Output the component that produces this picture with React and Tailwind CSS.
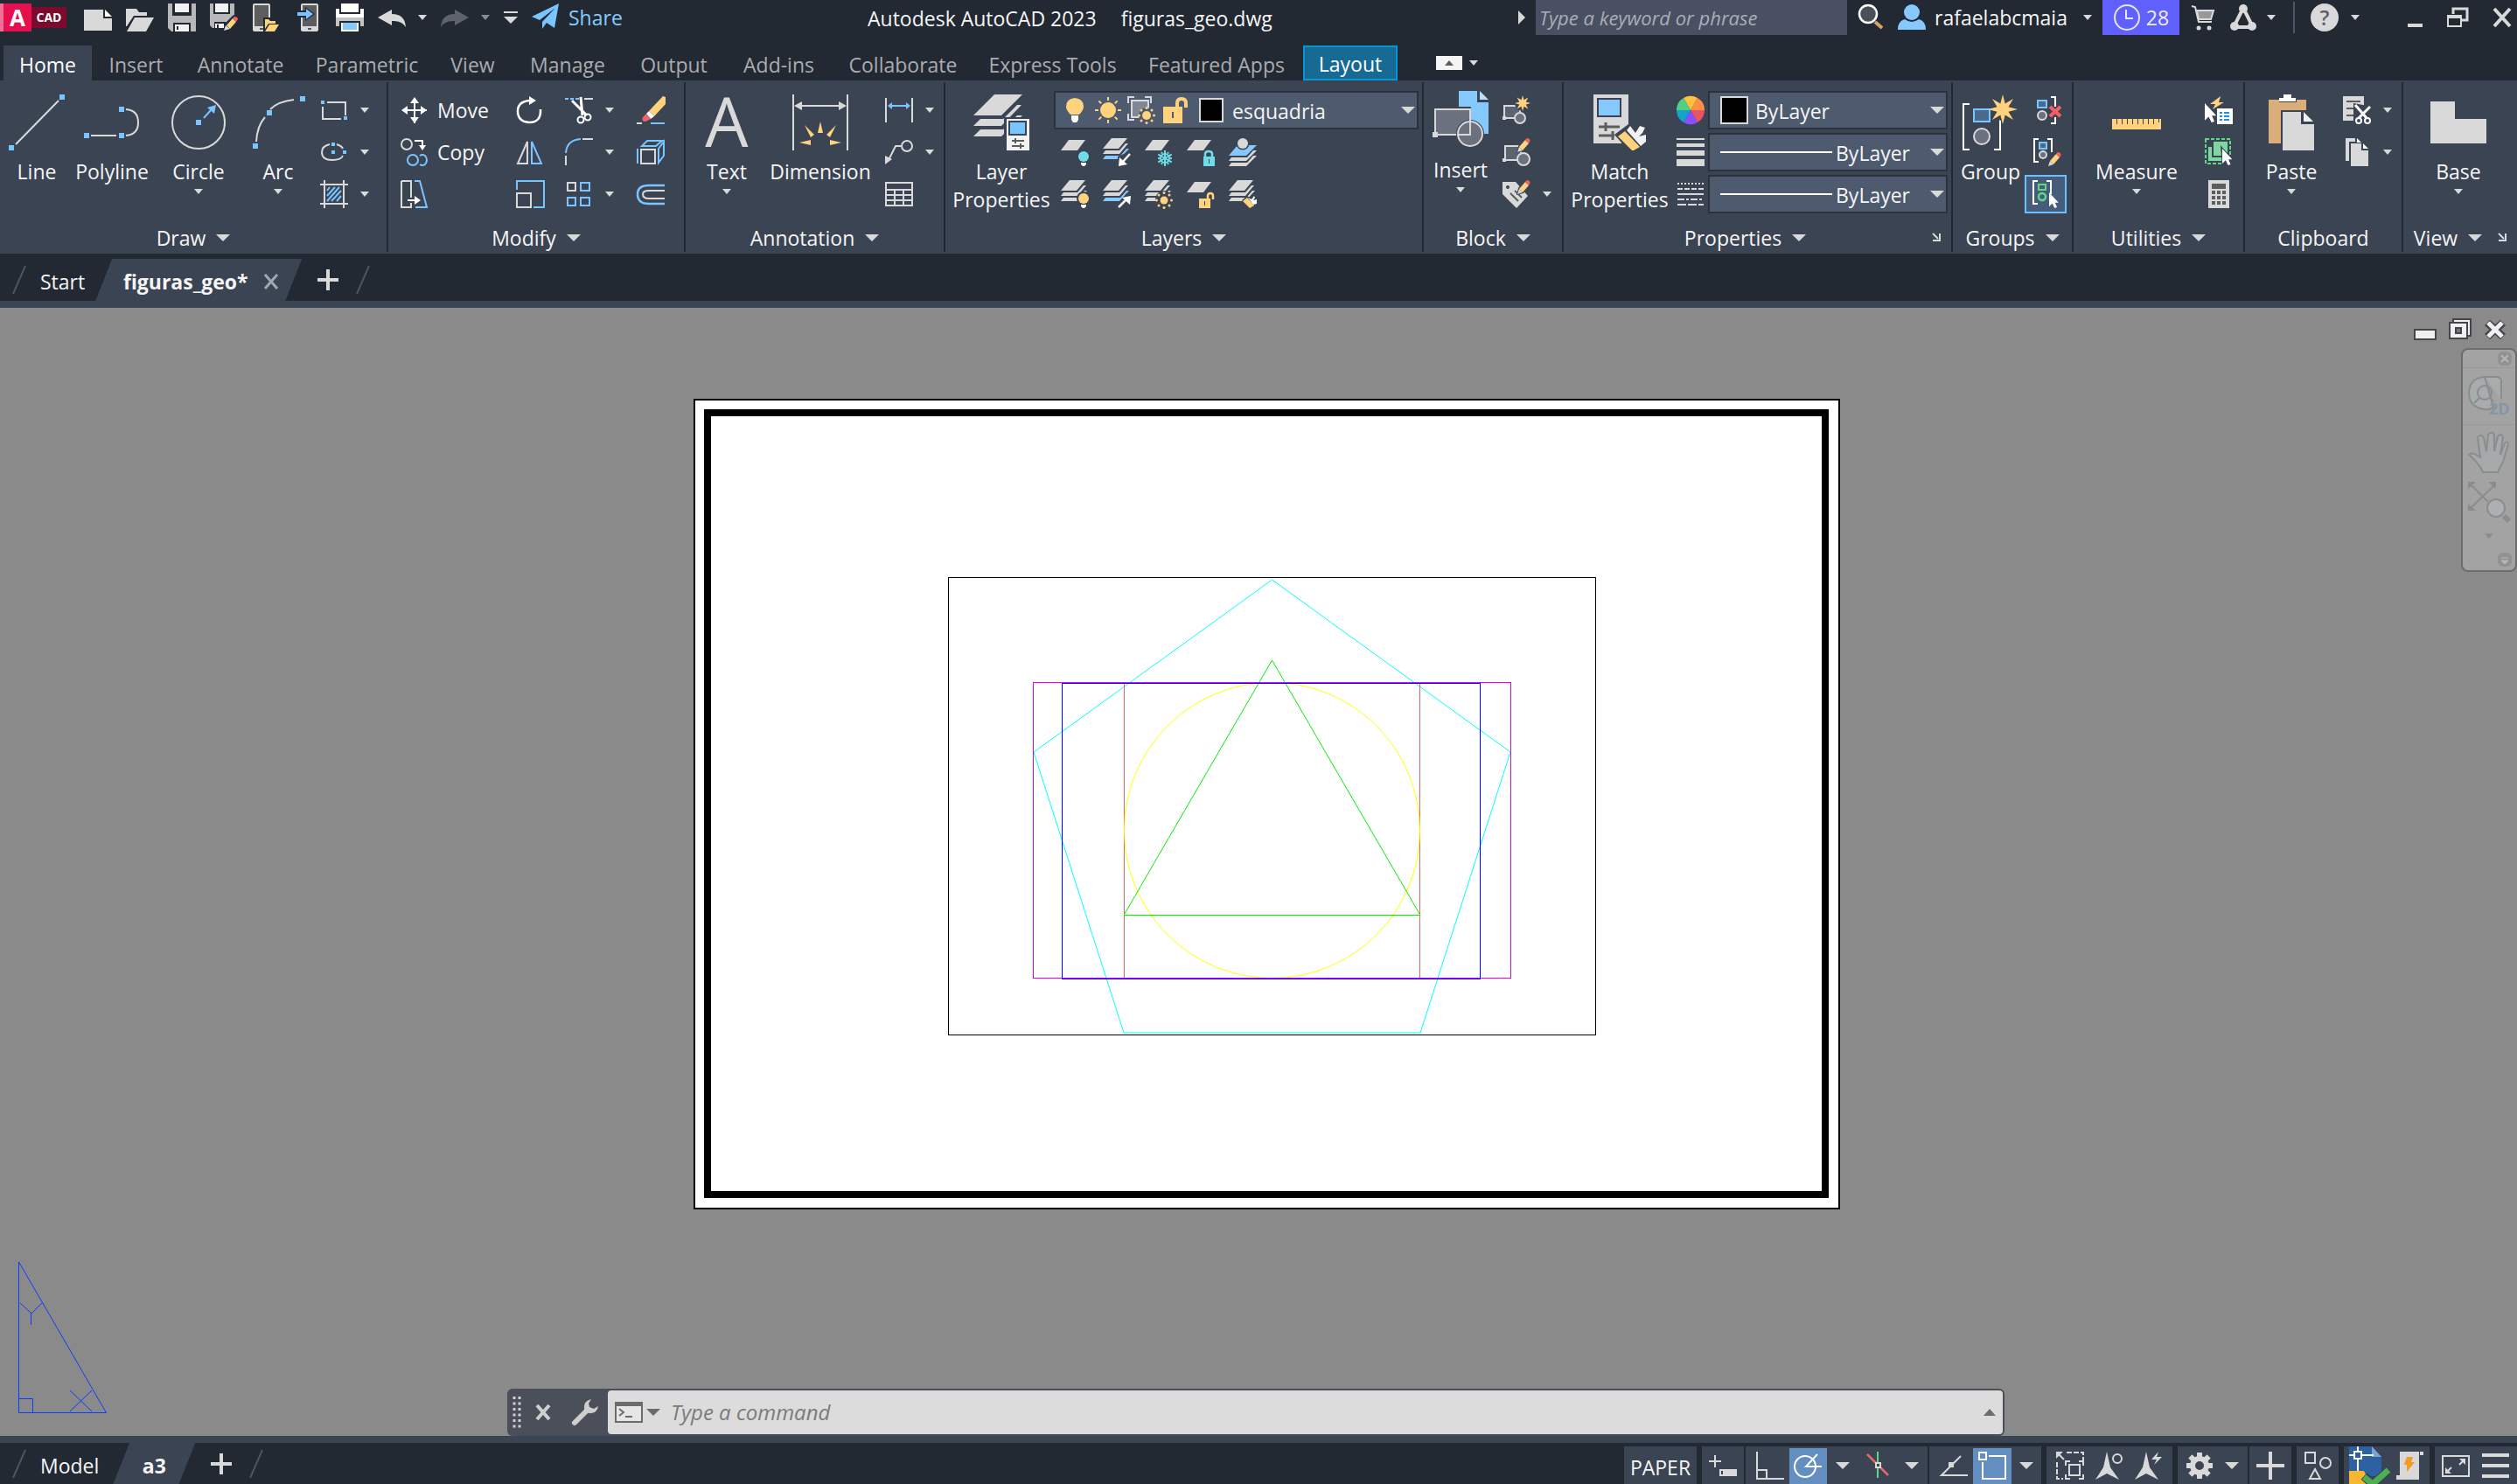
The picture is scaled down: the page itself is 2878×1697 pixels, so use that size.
import React from "react";

const G = "#d9d9d9";
const B = "#78c5ff";
const Y = "#ffd27d";
const W = "#ffffff";
const D = "#3b4453";
const C = "#6fdde8";
const GR = "#5fd885";

function Svg({ w = 32, h = 32, children }) {
  return (
    <svg width={w} height={h} viewBox={`0 0 ${w} ${h}`} fill="none" aria-hidden="true" className="shrink-0 overflow-visible">
      {children}
    </svg>
  );
}

function Caret({ w = 10, h = 6, color = G }) {
  return (
    <Svg w={w} h={h}>
      <path d={`M0 0H${w}L${w / 2} ${h}Z`} fill={color} />
    </Svg>
  );
}

function star(cx, cy, r, r2, n) {
  const pts = [];
  for (let i = 0; i < n * 2; i++) {
    const rr = i % 2 ? r2 : r;
    const a = (Math.PI * i) / n;
    pts.push(`${(cx + rr * Math.sin(a)).toFixed(1)},${(cy - rr * Math.cos(a)).toFixed(1)}`);
  }
  return pts.join(" ");
}

const Sq = ({ x, y, c = B }) => <rect x={x} y={y} width="6" height="6" fill={c} />;
const Dots = ({ cx, cy, r, n = 8, s = 1.5, c = Y }) =>
  Array.from({ length: n }, (_, i) => {
    const a = (2 * Math.PI * i) / n;
    return <circle key={i} cx={cx + r * Math.sin(a)} cy={cy - r * Math.cos(a)} r={s} fill={c} />;
  });
const Rays = ({ cx, cy, r1, r2, n = 8, sw = 2, c = Y }) =>
  Array.from({ length: n }, (_, i) => {
    const a = (2 * Math.PI * i) / n;
    const sx = Math.sin(a);
    const sy = -Math.cos(a);
    return <line key={i} x1={cx + r1 * sx} y1={cy + r1 * sy} x2={cx + r2 * sx} y2={cy + r2 * sy} stroke={c} strokeWidth={sw} />;
  });

const Sheet1 = () => <path d="M0 14L9 2H28L19 14Z" fill={G} />;
const Stack = ({ last = G }) => (
  <>
    <path d="M0 12L10 0H28L18 12Z" fill={G} />
    <path d="M0 18L3 14H19L26 6H29L19 18Z" fill={G} />
    <path d="M0 24L3 20H20L27 12H30L19 24Z" fill={last} />
  </>
);
const SmallBulb = ({ c }) => (
  <>
    <circle cx="26" cy="21" r="8" fill={D} />
    <circle cx="26" cy="21" r="6" fill={c} />
    <path d="M23 28H29V30L27 32H25L23 30Z" fill={W} />
  </>
);
const Pencil = ({ x, y }) => (
  <g transform={`translate(${x} ${y})`}>
    <path d="M-1 17L1 9L9 -1L15 2L15 6L7 15Z" fill={D} />
    <path d="M0 16L2 10L6 14Z" fill={G} />
    <path d="M2 10L9 2L13 6L6 14Z" fill={Y} />
    <path d="M9 2Q11 -1 13 0.500Q16 2 13 6Z" fill="#f75f66" />
  </g>
);
const Cursor = ({ x, y, s = 1 }) => (
  <path transform={`translate(${x} ${y}) scale(${s})`} d="M0 0V18L4 14L7 20L10 19L7.500 13H12Z" fill={W} />
);

const I = {
  fileNew: <Svg><path d="M0 7H22V17H32V31H0Z" fill={G} /><path d="M24 7L32 15H24Z" fill={W} /></Svg>,
  open: <Svg><path d="M0 6H12L15 10H24V14H9L1 26H0Z" fill={G} /><path d="M10 16H32L23 32H1Z" fill={G} /></Svg>,
  save: (
    <Svg><path d="M0 0H5V12H27V0H32V32H26V22H6V32H4L0 28Z" fill="#b8b8b8" /><path d="M0 12H32V14H0Z" fill="#222932" /><path d="M0 12H5V22H0ZM27 12H32V22H27ZM0 14H32V22H0Z" fill="#b8b8b8" /><rect x="8" y="0" width="16" height="10" fill="#f2f2f2" /><rect x="8" y="24" width="16" height="8" fill="#f2f2f2" /><rect x="10" y="26" width="2" height="4" fill="#222932" /></Svg>
  ),
  saveAs: (
    <Svg><path d="M0 0H4V12H23V0H28V20L20 28H18V21H5V28H3L0 25Z" fill="#b8b8b8" /><rect x="6" y="0" width="15" height="10" fill="#f2f2f2" /><path d="M6 23H16V28H6Z" fill="#f2f2f2" /><rect x="8" y="24" width="2" height="4" fill="#222932" /><path d="M15 32L18 22L27 13L33 18L23 29Z" fill="#222932" /><path d="M16 31L18 25L23 29Z" fill={G} /><path d="M19 25L26 17L30 21L23 29Z" fill={Y} /><path d="M26 17Q29 13 32 17Q32 19 30 21Z" fill="#f75f66" /></Svg>
  ),
  phoneOpen: (
    <Svg><rect x="1" y="0" width="20" height="32" rx="2" fill={G} /><rect x="3" y="2" width="16" height="24" fill="#5d5d5d" /><rect x="9" y="28" width="4" height="2" fill="#555" /><path d="M13 16H31V32H13Z" fill="#222932" /><path d="M15 18H19L21 20H27V23H19L15 29Z" fill={Y} /><path d="M20 24H31L26 32H15Z" fill={Y} /></Svg>
  ),
  phoneSave: (
    <Svg><rect x="8" y="0" width="20" height="32" rx="2" fill={G} /><rect x="10" y="2" width="16" height="24" fill="#5d5d5d" /><rect x="16" y="28" width="4" height="2" fill="#555" /><path d="M4 8H13V4L24 12L13 20V16H4Z" fill="#222932" /><path d="M4 10H14V6L22 12L14 18V14H4Z" fill={B} /></Svg>
  ),
  print: (
    <Svg><rect x="6" y="0" width="20" height="10" fill={W} /><path d="M0 6H4V12H28V6H32V16H0Z" fill={W} /><path d="M0 16H32V26H28V20H4V26H0Z" fill="#c4c4c4" /><path d="M6 22H26V32H6Z" fill={W} /><rect x="8" y="22" width="16" height="8" fill="#86c9ff" /></Svg>
  ),
  undo: <Svg><path d="M0 16L16 7V12Q31 12 32 27Q27 19 16 20V25Z" fill={G} /></Svg>,
  redo: <Svg><path d="M32 16L16 7V12Q1 12 0 27Q5 19 16 20V25Z" fill="#5e636b" /></Svg>,
  custom: <Svg w={16} h={16}><rect x="0" y="1" width="16" height="2" fill={G} /><path d="M0 7H16L8 15Z" fill={G} /></Svg>,
  share: <Svg><path d="M31 0L0 15L9 19L27 5L12 21V29L17 22L26 28Z" fill={B} /></Svg>,
  search: <Svg><circle cx="12" cy="12" r="10" fill="#4a505a" stroke={W} strokeWidth="2.500" /><path d="M20 21L28 28" stroke="#d9a066" strokeWidth="4" /></Svg>,
  user: <Svg><circle cx="16" cy="10" r="9" fill="#86c9ff" /><path d="M0 30Q0 20 8 18Q16 24 24 18Q32 20 32 30Z" fill="#86c9ff" /></Svg>,
  clock: <Svg><circle cx="16" cy="16" r="14" stroke="#e6e6ff" strokeWidth="2" /><path d="M15 7V17H23" stroke="#e6e6ff" strokeWidth="2" /></Svg>,
  cart: <Svg w={26} h={30}><path d="M0 2L4 3L8 20H23" stroke={G} strokeWidth="2" /><path d="M6 7H25L22 17H8Z" fill="#999" stroke={G} strokeWidth="2" /><circle cx="8" cy="27" r="2.500" fill={G} /><circle cx="20" cy="27" r="2.500" fill={G} /></Svg>,
  appStore: <Svg w={30} h={30}><path d="M15 4L4 26H26Z" stroke={G} strokeWidth="4" /><circle cx="15" cy="5" r="5" fill={G} /><circle cx="5" cy="25" r="5" fill={G} /><circle cx="25" cy="25" r="5" fill={G} /></Svg>,
  line: <Svg w={64} h={64}><path d="M8 57L57 7" stroke={G} strokeWidth="2" /><Sq x={0} y={58} /><Sq x={58} y={0} /></Svg>,
  polyline: <Svg w={64} h={64}><path d="M8 47H37M48 17Q62 18 62 32Q62 46 48 47" stroke={G} strokeWidth="2" /><Sq x={0} y={44} /><Sq x={40} y={14} /><Sq x={40} y={44} /></Svg>,
  circle: <Svg w={64} h={64}><circle cx="32" cy="32" r="30" stroke={G} strokeWidth="2" /><Sq x={29} y={29} /><path d="M38 27L46 18" stroke={B} strokeWidth="2" /><path d="M52 12L50 22L42 15Z" fill={B} /></Svg>,
  arc: <Svg w={64} h={64}><path d="M7 54Q8 36 17 26M23 17Q32 8 50 6" stroke={G} strokeWidth="2" /><Sq x={3} y={56} /><Sq x={19} y={18} /><Sq x={57} y={2} /></Svg>,
  rect: <Svg><path d="M8 7H29V22M24 26H3V12" stroke={G} strokeWidth="2" /><rect x="1" y="5" width="4" height="4" fill={B} /><rect x="27" y="23" width="4" height="4" fill={B} /></Svg>,
  ellipse: <Svg><path d="M11 7Q2 9 2 16Q2 25 14 25Q24 25 26 20M19 7Q25 9 26 12" stroke={G} strokeWidth="2" /><rect x="13" y="5" width="4" height="4" fill={B} /><rect x="13" y="14" width="4" height="4" fill={B} /><rect x="26" y="14" width="4" height="4" fill={B} /></Svg>,
  hatch: <Svg><path d="M8 24L22 8M8 18L17 8M13 24L24 12M19 24L24 18M8 12L11 8" stroke={B} strokeWidth="2" /><path d="M5 0V32M27 0V32M0 5H32M0 27H32" stroke={G} strokeWidth="2" /></Svg>,
  move: <Svg><path d="M16 2V31M2 16H30" stroke={W} strokeWidth="2" /><path d="M16 1L21 8H11ZM16 31L21 24H11ZM1 16L8 11V21ZM30 16L23 11V21Z" fill={W} /></Svg>,
  copy: <Svg><circle cx="7" cy="7" r="6" stroke={G} strokeWidth="2" /><path d="M16 3H25V9" stroke={W} strokeWidth="2" /><path d="M21 8H29L25 14Z" fill={W} /><circle cx="14" cy="25" r="6" stroke={B} strokeWidth="2" /><path d="M22 20Q25 18 28 20Q32 25 28 30Q25 32 22 30" stroke={B} strokeWidth="2" /></Svg>,
  stretch: <Svg><path d="M16 1H22L30 31H17" stroke={B} strokeWidth="2" /><path d="M1 1H12V20M12 26V31H1V1" stroke={G} strokeWidth="2" /><path d="M8 23H17" stroke={W} strokeWidth="2" /><path d="M16 18L23 23L16 28Z" fill={W} /></Svg>,
  rotate: <Svg><path d="M28 15Q29 30 15 30Q2 29 2 17Q2 6 16 5" stroke={W} strokeWidth="2.500" /><path d="M15 0L23 5L15 10Z" fill={W} /></Svg>,
  mirror: <Svg><path d="M13 4V29H2Z" stroke={G} strokeWidth="2" /><path d="M18 4V29H29Z" stroke={B} strokeWidth="2" /></Svg>,
  scale: <Svg><path d="M1 11V1H32V31H20" stroke={B} strokeWidth="2" /><rect x="1" y="15" width="16" height="16" stroke={G} strokeWidth="2" /></Svg>,
  trim: <Svg><path d="M0 3H4M6 3H10M12 3H16" stroke={B} strokeWidth="2" /><path d="M22 3H32" stroke={G} strokeWidth="2" /><path d="M18 1L20 22M8 5L25 22" stroke={W} strokeWidth="3" /><circle cx="18" cy="27" r="3.500" stroke={W} strokeWidth="2" /><circle cx="26" cy="24" r="3.500" stroke={W} strokeWidth="2" /></Svg>,
  fillet: <Svg><path d="M1 17Q2 2 18 1" stroke={B} strokeWidth="2" /><path d="M20 1H32M1 20V31" stroke={G} strokeWidth="2" /></Svg>,
  array: <Svg><rect x="3" y="3" width="9" height="9" stroke={G} strokeWidth="2" /><path d="M18 3H28V12H18ZM3 20H12V29H3ZM18 20H28V29H18Z" stroke={B} strokeWidth="2" /></Svg>,
  erase: <Svg><path d="M14 17L30 0L33 1V9L20 23Z" fill={Y} /><path d="M14 17L20 23L16 26L11 20Z" fill={W} /><path d="M11 20L16 26L10 29Q5 29 7 24Z" fill="#f0666b" /><path d="M0 31H6" stroke={G} strokeWidth="2" /><path d="M16 31H32" stroke={B} strokeWidth="2" /></Svg>,
  explode: <Svg><path d="M1 12V29M12 3H29L22 9H6ZM31 4V20L25 28V12Z" stroke={B} strokeWidth="2" /><rect x="5" y="13" width="16" height="16" stroke={G} strokeWidth="2" /></Svg>,
  offset: <Svg><path d="M32 6H14Q1 6 1 16Q1 27 14 27H32" stroke={B} strokeWidth="2.500" /><path d="M32 12H14Q7 12 7 16Q7 21 14 21H32" stroke={G} strokeWidth="2" /></Svg>,
  text: <Svg w={64} h={64}><text x="32" y="60" textAnchor="middle" fontSize="78" fill={G} fontFamily="Open Sans, sans-serif">A</text></Svg>,
  dimension: (
    <Svg w={64} h={64}><path d="M1 0V64M63 0V64M4 13H60" stroke={G} strokeWidth="2" /><path d="M2 13L11 8V18ZM62 13L53 8V18Z" fill={G} /><path d="M32 31L35 44H29ZM14 35L25 46L21 49ZM50 35L39 46L43 49ZM8 55L21 52V58ZM56 55L43 52V58Z" fill={Y} /></Svg>
  ),
  linear: <Svg><path d="M1 2V30M31 2V30" stroke={G} strokeWidth="2" /><path d="M5 11H27" stroke={B} strokeWidth="2" /><path d="M3 11L8 7V15ZM29 11L24 7V15Z" fill={B} /></Svg>,
  leader: <Svg><circle cx="25" cy="9" r="6" stroke={G} strokeWidth="2" /><path d="M18 9H12L4 25" stroke={G} strokeWidth="2" /><path d="M0 30V20L8 24Z" fill={G} /></Svg>,
  table: <Svg><rect x="1" y="3" width="30" height="26" stroke={G} strokeWidth="2" /><path d="M1 11H31M1 17H31M1 23H31M11 11V29M21 11V29" stroke={G} strokeWidth="2" /></Svg>,
  layerProps: (
    <Svg w={64} h={64}><path d="M0 24L24 0H56L32 24Z" fill={G} /><path d="M0 36L8 28H34L50 12H55L32 36Z" fill={G} /><path d="M0 48L8 40H34L50 24H56L32 48Z" fill={G} /><rect x="35" y="26" width="29" height="38" fill={D} /><rect x="38" y="28" width="26" height="36" fill="#f2f2f2" /><rect x="41" y="31" width="19" height="15" fill={B} stroke={D} strokeWidth="2" /><path d="M44 53H58M44 59H58M48 50V56M54 56V62" stroke="#5d5d5d" strokeWidth="2" /></Svg>
  ),
  bulb: <Svg w={20} h={32}><path d="M10 2Q20 3 20 12Q20 16 15 21H5Q0 16 0 12Q0 3 10 2Z" fill={Y} /><path d="M6 22H14V27L12 30H8L6 27Z" fill={W} /></Svg>,
  sun: <Svg w={30} h={32}><circle cx="15" cy="16" r="9" fill={Y} /><Rays cx={15} cy={16} r1={11} r2={15} /></Svg>,
  vpSun: <Svg><path d="M1 8V1H8M20 1H27V8M1 20V27H8" stroke={G} strokeWidth="2" /><path d="M5 5H24V14L14 24H5Z" fill="#808795" stroke={G} strokeWidth="2" /><circle cx="22" cy="22" r="9" fill="#4e5a6e" /><circle cx="22" cy="22" r="5" fill={Y} /><Dots cx={22} cy={22} r={8.5} /></Svg>,
  lockOpen: <Svg w={28} h={32}><path d="M16 13V8Q16 3 21 3Q26 3 26 8V13" stroke={Y} strokeWidth="4" /><rect x="0" y="12" width="22" height="19" fill={Y} /><rect x="10" y="18" width="2" height="7" fill="#4e5a6e" /></Svg>,
  swatch: <Svg w={28} h={28}><rect x="1" y="1" width="26" height="26" fill="#000" stroke={G} strokeWidth="2" /></Svg>,
  swatchBig: <Svg><rect x="1" y="1" width="30" height="30" fill="#000" stroke={G} strokeWidth="2" /></Svg>,
  lOff: <Svg><Sheet1 /><SmallBulb c={C} /></Svg>,
  lCur: <Svg><Stack last="#86c9ff" /><path d="M17 33V21L33 14V32Z" fill={D} /><path d="M31 18L22 28" stroke={W} strokeWidth="2.500" /><path d="M18 32L19 22L28 30Z" fill={W} /></Svg>,
  lFreeze: <Svg><Sheet1 /><Rays cx={23} cy={23} r1={0} r2={9} n={6} c={C} /><circle cx="23" cy="23" r="5" stroke={C} strokeWidth="2" /><Rays cx={23} cy={23} r1={6} r2={8} n={12} sw={2} c={C} /></Svg>,
  lLock: <Svg><Sheet1 /><path d="M21 22V18Q21 15 25 15Q29 15 29 18V22" stroke={C} strokeWidth="2.500" /><rect x="19" y="21" width="13" height="11" fill={C} /><rect x="25" y="24" width="1" height="5" fill={D} /></Svg>,
  lMatch: <Svg><path d="M0 20L10 8H32L20 20Z" fill="#86c9ff" /><circle cx="16" cy="6" r="7.500" fill={D} /><circle cx="16" cy="6" r="6" fill={G} /><path d="M0 26L3 22H21L28 14H32L20 26ZM0 32L3 28H21L28 20H32L20 32Z" fill={G} /></Svg>,
  lOn: <Svg><Stack /><SmallBulb c={Y} /></Svg>,
  lPrev: <Svg><Stack last="#86c9ff" /><path d="M20 33V25L27 15L33 17V32Z" fill={D} /><path d="M18 31L27 22" stroke={W} strokeWidth="2.500" /><path d="M32 18L31 28L22 20Z" fill={W} /></Svg>,
  lThaw: <Svg><Stack /><circle cx="22" cy="22" r="10" fill={D} /><circle cx="22" cy="23" r="4.500" fill={Y} /><Dots cx={22} cy={23} r={8.5} /></Svg>,
  lUnlock: <Svg><Sheet1 /><path d="M24 22V18Q24 15 27 15Q30 15 30 18V22" stroke={Y} strokeWidth="2.500" /><rect x="14" y="21" width="13" height="11" fill={Y} /><rect x="20" y="24" width="1" height="5" fill={D} /></Svg>,
  lBrush: <Svg><Stack /><path d="M15 23L21 18L26 21L29 16L33 20V32H21Z" fill={D} /><path d="M16 24L21 20L29 29L24 32Z" fill={Y} /><path d="M22 20L26 22L29 18L30 20L28 23L32 22V27L28 28Z" fill={W} /></Svg>,
  insert: (
    <Svg w={64} h={68}><path d="M30 0H51V13H64V49H30Z" fill="#86c9ff" /><path d="M54 0L64 10H54Z" fill="#b9e0ff" /><path d="M0 18H44V34L58 50L40 60H0Z" fill={D} /><rect x="3" y="21" width="40" height="29" fill="#6b717f" stroke={G} strokeWidth="2" /><circle cx="43" cy="49" r="16" fill={D} /><circle cx="43" cy="49" r="14" fill="#6b717f" stroke={G} strokeWidth="2" /><path d="M28 50H43V33" stroke={G} strokeWidth="2" /><rect x="0" y="47" width="6" height="6" fill={G} /></Svg>
  ),
  blockNew: <Svg><rect x="2" y="11" width="18" height="14" fill="#5b6270" stroke={G} strokeWidth="2" /><circle cx="20" cy="25" r="6" fill="#6b717f" stroke={G} strokeWidth="2" /><rect x="0" y="23" width="4" height="4" fill={G} /><circle cx="23" cy="8" r="9" fill={D} /><polygon points={star(23, 8, 9, 4, 8)} fill={Y} /></Svg>,
  blockEdit: <Svg><rect x="3" y="9" width="18" height="16" fill="#5b6270" stroke={G} strokeWidth="2" /><circle cx="24" cy="24" r="7" fill="#6b717f" stroke={G} strokeWidth="2" /><rect x="0" y="23" width="4" height="4" fill={G} /><Pencil x={17} y={0} /></Svg>,
  attrEdit: <Svg><path d="M0 2H15L29 18L16 32L0 16Z" fill={G} /><circle cx="6" cy="8" r="2" fill={D} /><path d="M9 15L18 24M14 12L22 20" stroke="#5d5d5d" strokeWidth="2" /><Pencil x={17} y={0} /></Svg>,
  match: (
    <Svg w={64} h={64}><path d="M2 0H42V38L34 56H2Z" fill={G} /><rect x="7" y="5" width="26" height="20" fill="#86c9ff" stroke={D} strokeWidth="2" /><path d="M8 37H32M8 47H26M16 32V42M24 42V52" stroke="#5d5d5d" strokeWidth="3" /><path d="M26 46L42 34L64 34V56L50 66L42 64Z" fill={D} /><path d="M30 48L38 42L55 60L48 64H46Z" fill={Y} /><path d="M40 41L44 36L50 44L55 36L61 38L58 44L54 48L62 46V54L56 59Z" fill="#f2f2f2" /></Svg>
  ),
  wheel: (
    <Svg>
      <path d="M16 16L8 2.100A16 16 0 0 1 24 2.100Z" fill="#ffc23d" /><path d="M16 16L24 2.100A16 16 0 0 1 32 16Z" fill="#ff8f43" /><path d="M16 16L32 16A16 16 0 0 1 24 29.900Z" fill="#e85460" /><path d="M16 16L24 29.900A16 16 0 0 1 8 29.900Z" fill="#8a4dff" /><path d="M16 16L8 29.900A16 16 0 0 1 0 16Z" fill="#12a5c9" /><path d="M16 16L0 16A16 16 0 0 1 8 2.100Z" fill="#52cf83" />
    </Svg>
  ),
  weights: <Svg><path d="M0 0H32V2H0ZM0 6H32V10H0ZM0 14H32V20H0ZM0 24H32V32H0Z" fill={G} /></Svg>,
  types: <Svg><path d="M1 4H31" stroke={G} strokeWidth="2" strokeDasharray="2 2" /><path d="M1 10H31" stroke={G} strokeWidth="2" strokeDasharray="6 2" /><path d="M1 16H31" stroke={G} strokeWidth="2" /><path d="M1 22H31" stroke={G} strokeWidth="2" strokeDasharray="8 2 3 2" /><path d="M1 28H31" stroke={G} strokeWidth="2" strokeDasharray="10 2" /></Svg>,
  group: (
    <Svg w={64} h={64}><path d="M8 11H1V63H8M36 63H43V28" stroke={W} strokeWidth="2" /><rect x="13" y="17" width="18" height="14" fill="#4a6a8c" stroke={B} strokeWidth="2" /><circle cx="22" cy="48" r="9" fill="#6b717f" stroke={G} strokeWidth="2" /><circle cx="46" cy="16" r="14" fill={D} /><polygon points={star(46, 17, 17, 7, 8)} fill={Y} /></Svg>
  ),
  ungroup: <Svg><path d="M20 1H25V12M25 24V31H20" stroke={W} strokeWidth="2" /><rect x="5" y="5" width="10" height="8" fill="#4a6a8c" stroke={B} strokeWidth="2" /><circle cx="10" cy="22" r="5" fill="#6b717f" stroke={G} strokeWidth="2" /><path d="M19 12L31 23M31 12L19 23" stroke="#f75f66" strokeWidth="4" /></Svg>,
  groupEdit: <Svg><path d="M6 1H1V27H6M16 1H21V16" stroke={W} strokeWidth="2" /><rect x="7" y="5" width="8" height="7" fill="#4a6a8c" stroke={B} strokeWidth="2" /><circle cx="11" cy="19" r="4" fill="#6b717f" stroke={G} strokeWidth="2" /><Pencil x={17} y={16} /></Svg>,
  groupSel: <Svg><path d="M7 1H2V27H7M17 1H22V16" stroke={W} strokeWidth="2" /><rect x="8" y="5" width="8" height="6" stroke={GR} strokeWidth="2" /><circle cx="12" cy="19" r="4" stroke={GR} strokeWidth="2.500" /><Cursor x={20} y={14} s={0.9} /></Svg>,
  ruler: <Svg w={56} h={64}><path d="M0 28H5V34H6V28H11V34H12V28H17V34H18V28H23V34H24V28H29V34H30V28H35V34H36V28H41V34H42V28H47V34H48V28H53V32H54V28H56V40H0Z" fill={Y} /></Svg>,
  quickSel: <Svg><path d="M18 0L6 9H12L9 15L22 7H16Z" fill={Y} /><rect x="14" y="14" width="18" height="18" fill={W} /><path d="M17 19H20M22 19H28M17 23H20M22 23H28M17 27H20M22 27H28" stroke="#1c8fe8" strokeWidth="2" /><path d="M-1 6L14 24V32H-1Z" fill={D} /><Cursor x={0} y={8} s={1.1} /></Svg>,
  selAll: <Svg><rect x="1" y="1" width="28" height="28" stroke={GR} strokeWidth="2" strokeDasharray="4 2" /><path d="M10 4H26V20H10ZM4 10H8V22H20V26H4Z" fill="#7fd6a0" /><path d="M18 8L34 26V34H20Z" fill={D} /><Cursor x={20} y={12} s={0.95} /></Svg>,
  calc: <Svg><rect x="4" y="0" width="24" height="32" fill={G} /><rect x="8" y="4" width="16" height="6" fill="#5d5d5d" /><path d="M10 12V28M16 12V28M22 12V28" stroke="#5d5d5d" strokeWidth="4" strokeDasharray="4 2" /></Svg>,
  paste: (
    <Svg w={52} h={64}><path d="M0 6H12V9H32V6H43V18H14V56H0Z" fill="#d9ae78" /><path d="M12 4H17V0H26V4H31V8H12Z" fill={W} /><path d="M16 20H37V34H52V64H16Z" fill={G} /><path d="M40 20L51 31H40Z" fill="#f2f2f2" /></Svg>
  ),
  cut: <Svg><path d="M0 0H24V10L20 28H0Z" fill={G} /><path d="M4 6H20M4 14H14M4 22H12" stroke="#5d5d5d" strokeWidth="2" /><path d="M12 8L34 12V32H12Z" fill={D} /><path d="M14 10L27 25M31 12L18 25" stroke={W} strokeWidth="3" /><circle cx="18" cy="28" r="3" stroke={W} strokeWidth="2" /><circle cx="28" cy="28" r="3" stroke={W} strokeWidth="2" /></Svg>,
  copyClip: <Svg><path d="M3 0H14V4H7V26H3Z" fill={G} /><path d="M16 0L21 5H16Z" fill={W} /><path d="M9 6H21V14H29V32H9Z" fill={G} /><path d="M23 6L29 12H23Z" fill={W} /></Svg>,
  base: <Svg w={64} h={64}><path d="M0 8H28V28H64V56H0Z" fill={G} /></Svg>,
  launcher: <Svg w={10} h={10}><path d="M1 1L7 7" stroke={G} strokeWidth="2" /><path d="M9 1V9H1" stroke={G} strokeWidth="2" /></Svg>,
};

function Tool({ name, icon, caret, selected }) {
  return (
    <button type="button" aria-label={name} aria-pressed={selected} className="flex h-12 items-center gap-3.5 whitespace-nowrap">
      {I[icon]}
      {caret && <Caret />}
    </button>
  );
}

function Col({ tools, className = "" }) {
  return (
    <div className={`flex shrink-0 flex-col items-start ${className}`}>
      {tools.map(([name, icon, caret]) => (
        <Tool key={name} name={name} icon={icon} caret={caret} />
      ))}
    </div>
  );
}

function Big({ icon, lines, caret, className = "" }) {
  return (
    <button type="button" className={`flex shrink-0 flex-col items-center pt-1.5 ${className}`}>
      {I[icon]}
      <span className="mt-2 flex flex-col items-center leading-8 whitespace-nowrap">
        {lines.map((l) => (
          <span key={l}>{l}</span>
        ))}
      </span>
      {caret && (
        <span className="mt-1">
          <Caret />
        </span>
      )}
    </button>
  );
}

function Panel({ title, caret = true, launcher, last, children }) {
  return (
    <section aria-label={title} className={`relative flex min-w-0 flex-col pt-2 ${last ? "" : "border-r-2 border-[#222932]"}`}>
      <div className="flex h-[148px] items-start">{children}</div>
      <button type="button" className={`flex h-[38px] items-center justify-center gap-3 pt-1.5 whitespace-nowrap ${launcher ? "pr-7" : ""}`}>
        {title}
        {caret && <Caret w={16} h={8} />}
      </button>
      {launcher && (
        <button type="button" aria-label={`${title} settings`} className="absolute right-3 bottom-3">
          {I.launcher}
        </button>
      )}
    </section>
  );
}

function Combo({ label, value, lead, className = "", end }) {
  return (
    <label className={`flex h-11 items-center border-2 border-[#2b323e] bg-[#4e5a6e] ${className}`}>
      {lead}
      <select aria-label={label} className={`h-full min-w-0 flex-1 appearance-none bg-transparent pt-0.5 text-[#f5f5f5] outline-none ${end ? "pl-1" : "pl-2"}`}>
        <option>{value}</option>
      </select>
      <span className="mr-0.5 shrink-0">
        <Caret w={16} h={8} />
      </span>
    </label>
  );
}

const TABS = [
  ["Insert", "w-[101px]"],
  ["Annotate", "w-[138px]"],
  ["Parametric", "w-[151px]"],
  ["View", "w-[91px]"],
  ["Manage", "w-[126px]"],
  ["Output", "w-[117px]"],
  ["Add-ins", "w-[123px]"],
  ["Collaborate", "w-[161px]"],
  ["Express Tools", "w-[181px]"],
  ["Featured Apps", "w-[194px]"],
];

function TitleBar() {
  return (
    <header className="grid h-10 grid-cols-[992fr_744fr_1142fr] items-center">
      <div className="flex items-center">
        <div className="flex items-center font-bold text-white">
          <span className="flex h-8 w-9 items-center justify-center border-l-4 border-[#f0709a] bg-[#e5104f] text-[26px] leading-none">A</span>
          <span className="flex h-6 w-10 items-center justify-center bg-[#7b0a2c] text-sm leading-none">CAD</span>
        </div>
        <div className="ml-5 flex items-center gap-4">
          <button type="button" aria-label="New">{I.fileNew}</button>
          <button type="button" aria-label="Open">{I.open}</button>
          <button type="button" aria-label="Save">{I.save}</button>
          <button type="button" aria-label="Save As">{I.saveAs}</button>
          <button type="button" aria-label="Open from mobile">{I.phoneOpen}</button>
          <button type="button" aria-label="Save to mobile">{I.phoneSave}</button>
          <button type="button" aria-label="Plot">{I.print}</button>
          <button type="button" aria-label="Undo" className="flex items-center gap-3.5">{I.undo}<Caret /></button>
          <button type="button" aria-label="Redo" className="flex items-center gap-3.5">{I.redo}<Caret color="#8a8e94" /></button>
          <button type="button" aria-label="Customize toolbar">{I.custom}</button>
          <button type="button" className="flex items-center gap-2.5 text-[#86ccff]">{I.share}Share</button>
        </div>
      </div>
      <h1 className="flex gap-7 pt-0.5 whitespace-pre text-[#f5f5f5]">
        <span>Autodesk AutoCAD 2023</span>
        <span>figuras_geo.dwg</span>
      </h1>
      <div className="flex items-center">
        <Svg w={8} h={16}><path d="M0 0L8 8L0 16Z" fill={G} /></Svg>
        <input aria-label="Search" placeholder="Type a keyword or phrase" className="ml-3 h-10 w-[356px] bg-[#495063] px-1 text-[22px] italic outline-none placeholder:text-[#a9adb5]" />
        <button type="button" aria-label="Search" className="ml-3">{I.search}</button>
        <button type="button" className="ml-3.5 flex w-[222px] items-center text-[#f5f5f5]">
          {I.user}
          <span className="ml-2.5">rafaelabcmaia</span>
          <span className="ml-auto"><Caret /></span>
        </button>
        <button type="button" className="ml-3 flex h-10 w-[88px] items-center justify-center gap-1.5 bg-[#6060ff] text-[#eeeeff]">{I.clock}28</button>
        <button type="button" aria-label="Cart" className="ml-3.5">{I.cart}</button>
        <button type="button" aria-label="App Store" className="ml-[18px] flex items-center gap-3">{I.appStore}<Caret /></button>
        <span className="ml-5 h-9 w-0.5 bg-[#4b5568]" />
        <button type="button" aria-label="Help" className="ml-[18px] flex items-center gap-3.5">
          <span className="flex size-8 items-center justify-center rounded-full bg-[#d9d9d9] text-2xl font-semibold text-[#5a5f66]">?</span>
          <Caret />
        </button>
        <div className="mr-1.5 ml-auto flex items-center gap-7">
          <button type="button" aria-label="Minimize"><Svg w={17} h={24}><rect y="19" width="17" height="4" fill={G} /></Svg></button>
          <button type="button" aria-label="Restore">
            <Svg w={24} h={24}><path d="M7 8V2H23V15H17" stroke={G} strokeWidth="3" /><path d="M1 10H16V22H1Z" stroke={G} strokeWidth="2" /><path d="M0 10H17V13H0Z" fill={G} /></Svg>
          </button>
          <button type="button" aria-label="Close"><Svg w={22} h={22}><path d="M2 1L20 21M20 1L2 21" stroke={G} strokeWidth="4" /></Svg></button>
        </div>
      </div>
    </header>
  );
}

function Ribbon() {
  return (
    <div className="grid grid-cols-[444fr_340fr_297fr_547fr_160fr_445fr_138fr_196fr_181fr_130fr] bg-[#3b4453] py-0.5 text-[#f5f5f5]">
      <Panel title="Draw">
        <Big icon="line" lines={["Line"]} className="w-[84px]" />
        <Big icon="polyline" lines={["Polyline"]} className="w-[88px]" />
        <Big icon="circle" lines={["Circle"]} caret className="w-[110px]" />
        <Big icon="arc" lines={["Arc"]} caret className="w-[72px]" />
        <Col className="ml-3" tools={[["Rectangle", "rect", true], ["Ellipse", "ellipse", true], ["Hatch", "hatch", true]]} />
      </Panel>
      <Panel title="Modify">
        <div className="ml-3.5 flex w-[132px] flex-col">
          <button type="button" className="flex h-12 items-center gap-2.5">{I.move}Move</button>
          <button type="button" className="flex h-12 items-center gap-2.5">{I.copy}Copy</button>
          <Tool name="Stretch" icon="stretch" />
        </div>
        <Col tools={[["Rotate", "rotate"], ["Mirror", "mirror"], ["Scale", "scale"]]} />
        <Col className="ml-6" tools={[["Trim", "trim", true], ["Fillet", "fillet", true], ["Array", "array", true]]} />
        <Col className="ml-[26px]" tools={[["Erase", "erase"], ["Explode", "explode"], ["Offset", "offset"]]} />
      </Panel>
      <Panel title="Annotation">
        <Big icon="text" lines={["Text"]} caret className="w-[94px]" />
        <Big icon="dimension" lines={["Dimension"]} className="w-[120px]" />
        <Col className="ml-3.5" tools={[["Linear", "linear", true], ["Leader", "leader", true], ["Table", "table"]]} />
      </Panel>
      <Panel title="Layers">
        <Big icon="layerProps" lines={["Layer", "Properties"]} className="w-32" />
        <div className="flex min-w-0 flex-1 flex-col pr-0.5">
          <div className="flex h-12 items-center">
            <Combo
              label="Layer"
              value="esquadria"
              className="mr-0.5 -ml-1 flex-1 pl-3"
              lead={
                <span className="mr-0.5 flex items-center gap-[13px]">
                  {I.bulb}{I.sun}
                  <span className="-ml-1.5">{I.vpSun}</span>
                  <span className="-ml-1">{I.lockOpen}</span>
                  {I.swatch}
                </span>
              }
            />
          </div>
          <div className="ml-1 flex gap-4">
            {["lOff", "lCur", "lFreeze", "lLock", "lMatch"].map((k, i) => (
              <Tool key={k} name={["Layer off", "Make current", "Freeze", "Lock", "Match layer"][i]} icon={k} />
            ))}
          </div>
          <div className="ml-1 flex gap-4">
            {["lOn", "lPrev", "lThaw", "lUnlock", "lBrush"].map((k, i) => (
              <Tool key={k} name={["Layers on", "Previous", "Thaw", "Unlock", "Change layer"][i]} icon={k} />
            ))}
          </div>
        </div>
      </Panel>
      <Panel title="Block">
        <button type="button" className="ml-2 flex w-[68px] flex-col items-center pt-0.5">
          {I.insert}
          <span className="mt-1.5 leading-8">Insert</span>
          <span className="mt-1"><Caret /></span>
        </button>
        <Col className="ml-3.5" tools={[["Create block", "blockNew"], ["Edit block", "blockEdit"], ["Edit attributes", "attrEdit", true]]} />
      </Panel>
      <Panel title="Properties" launcher>
        <Big icon="match" lines={["Match", "Properties"]} className="w-32" />
        <div className="ml-px flex shrink-0 flex-col">
          <Tool name="Object color" icon="wheel" />
          <Tool name="Lineweight" icon="weights" />
          <Tool name="Linetype" icon="types" />
        </div>
        <div className="ml-1 flex min-w-0 flex-1 flex-col gap-1 pt-0.5 pr-1">
          <Combo label="Object color" value="ByLayer" className="pl-3" lead={I.swatchBig} />
          <Combo label="Lineweight" value="ByLayer" className="pl-3" end lead={<span className="h-0.5 w-32 bg-white" />} />
          <Combo label="Linetype" value="ByLayer" className="pl-3" end lead={<span className="h-0.5 w-32 bg-white" />} />
        </div>
      </Panel>
      <Panel title="Groups">
        <Big icon="group" lines={["Group"]} className="ml-1 w-[78px]" />
        <div className="flex flex-col">
          <span className="pl-2.5"><Tool name="Ungroup" icon="ungroup" /></span>
          <span className="pl-2.5"><Tool name="Group edit" icon="groupEdit" /></span>
          <span className="mt-0.5 flex h-11 w-12 items-center justify-center border-2 border-[#6ac1ff] bg-[#455d7b]">
            <Tool name="Group selection" icon="groupSel" selected />
          </span>
        </div>
      </Panel>
      <Panel title="Utilities">
        <Big icon="ruler" lines={["Measure"]} caret className="w-36" />
        <Col className="ml-1.5" tools={[["Quick select", "quickSel"], ["Select all", "selAll"], ["Calculator", "calc"]]} />
      </Panel>
      <Panel title="Clipboard" caret={false}>
        <Big icon="paste" lines={["Paste"]} caret className="w-[106px]" />
        <Col className="ml-1.5" tools={[["Cut", "cut", true], ["Copy clip", "copyClip", true]]} />
      </Panel>
      <Panel title="View" launcher last>
        <Big icon="base" lines={["Base"]} caret className="w-[126px]" />
      </Panel>
    </div>
  );
}

const Slash = () => (
  <Svg w={16} h={32}><path d="M1 32L15 0" stroke="#4b5567" strokeWidth="2" /></Svg>
);
const Plus = () => (
  <Svg w={24} h={24}><path d="M12 0V24M0 12H24" stroke={G} strokeWidth="4" /></Svg>
);

function Drawing() {
  return (
    <svg viewBox="0 0 1312 930" width="1312" height="930" fill="none" role="img" aria-label="Sheet a3" shapeRendering="crispEdges" className="absolute top-[104px] left-[793px]">
      <rect x="1" y="1" width="1309" height="925" fill="#fff" stroke="#000" strokeWidth="2" />
      <rect x="16" y="16" width="1278" height="894" stroke="#000" strokeWidth="8" />
      <rect x="291.500" y="204.500" width="740" height="523" stroke="#000" />
      <g shapeRendering="auto">
        <path d="M661.500 207L934 404L831 725H492L389 404Z" stroke="#00ffff" />
        <path d="M492.500 326V662M830.500 326V662" stroke="#ff5a5a" />
        <circle cx="661.500" cy="493.500" r="169" stroke="#ffff00" />
        <path d="M661.500 299L831 590.500H492Z" stroke="#00f000" />
      </g>
      <rect x="388.500" y="324.500" width="546" height="338" stroke="#e000e0" />
      <rect x="421.500" y="325.500" width="478" height="338" stroke="#0000ff" />
    </svg>
  );
}

function NavBar() {
  const s = "#8a8d8d";
  return (
    <nav aria-label="Navigation bar" className="absolute top-[46px] right-0 flex w-16 flex-col items-center rounded-lg border-2 border-[#6d6d6d] bg-[#a3a3a3]">
      <button type="button" aria-label="Close navigation bar" className="mr-1 flex h-5 items-center self-end">
        <Svg w={16} h={16}><rect width="16" height="16" rx="6" fill="#929292" /><path d="M4 4L12 12M12 4L4 12" stroke="#b5b5b5" strokeWidth="2" /></Svg>
      </button>
      <button type="button" aria-label="2D wheel" className="flex h-[66px] w-full items-center justify-center border-y border-[#999]">
        <Svg w={50} h={50}>
          <path d="M20 3H34Q39 4 39 8V28M30 38Q24 41 20 40Q2 38 2 21Q3 4 20 3Z" fill="#a9acac" stroke={s} strokeWidth="2" /><circle cx="20" cy="21" r="8" stroke={s} strokeWidth="2" /><path d="M14 27L8 33M26 27L30 31" stroke={s} strokeWidth="2" />
          <text x="25" y="46" fontSize="18" fontWeight="700" fill="#8794a5" fontFamily="Open Sans, sans-serif">2D</text>
        </Svg>
      </button>
      <button type="button" aria-label="Pan" className="mt-1.5">
        <Svg w={50} h={52}><path d="M18 48Q14 38 2 28Q6 24 15 31L12 8Q16 3 19 9L22 24L24 5Q28 0 31 5V24L35 7Q39 3 41 8L38 28L43 15Q47 11 47 16L41 36L35 48Z" fill="#a6a9a9" stroke={s} strokeWidth="2" /></Svg>
      </button>
      <button type="button" aria-label="Zoom extents" className="mt-1.5">
        <Svg w={50} h={50}><path d="M4 4L24 24M32 4L4 31" stroke={s} strokeWidth="2" /><path d="M1 1H10L1 9ZM33 1V9L24 1ZM1 34V26L10 34Z" fill={s} /><path d="M42 40L48 46" stroke={s} strokeWidth="6" /><circle cx="33" cy="31" r="10" fill="#adb0b0" stroke={s} strokeWidth="2" /></Svg>
      </button>
      <button type="button" aria-label="More zoom tools" className="mt-2.5"><Caret color={s} /></button>
      <button type="button" aria-label="Navigation bar options" className="mt-4 mr-1 mb-1 self-end">
        <Svg w={16} h={16}><rect width="16" height="16" rx="6" fill="#929292" /><path d="M4 6H12M4 9H12L8 13Z" stroke="#b5b5b5" strokeWidth="1" fill="#b5b5b5" /></Svg>
      </button>
    </nav>
  );
}

function Canvas() {
  return (
    <main className="relative min-h-[1290px] flex-1 overflow-hidden bg-[#8a8a8a]">
      <Drawing />
      <div className="absolute top-3 right-3 flex items-end gap-3.5">
        <button type="button" aria-label="Minimize drawing"><Svg w={26} h={14}><rect x="1" y="1" width="24" height="11" fill="#f0f0f0" stroke="#44464c" strokeWidth="2" /></Svg></button>
        <button type="button" aria-label="Restore drawing">
          <Svg w={26} h={26}><path d="M5 1H25V20H5Z" fill="#f0f0f0" stroke="#44464c" strokeWidth="2" /><rect x="1" y="5" width="20" height="18" fill="#f0f0f0" stroke="#44464c" strokeWidth="2" /><rect x="8" y="11" width="6" height="6" fill="#777" stroke="#44464c" strokeWidth="2" /></Svg>
        </button>
        <button type="button" aria-label="Close drawing"><Svg w={26} h={26}><path d="M4 5L22 21M22 5L4 21" stroke="#44464c" strokeWidth="9" /><path d="M5 5L21 21M21 5L5 21" stroke="#f0f0f0" strokeWidth="5" /></Svg></button>
      </div>
      <NavBar />
      <svg width="104" height="176" viewBox="0 0 104 176" fill="none" aria-label="UCS axes" stroke="#0a3cff" className="absolute bottom-[24px] left-5">
        <path d="M1.500 1V173.500H101.500Z" strokeWidth="1" />
        <path d="M1 157.500H17.500V173" />
        <g><line x1="3" y1="48" x2="16" y2="60" /><line x1="28" y1="48" x2="16" y2="60" /><line x1="15.500" y1="60" x2="15.500" y2="73" /></g>
        <g><line x1="60" y1="148" x2="85" y2="172" /><line x1="85" y1="148" x2="60" y2="172" /></g>
      </svg>
      <form className="absolute right-[586px] bottom-0 left-[580px] flex h-[54px] items-center rounded-md bg-[#4a4f59] py-0.5 pr-0.5 pl-1.5" onSubmit={(e) => e.preventDefault()}>
        <Svg w={10} h={36}><path d="M2 0V36M8 0V36" stroke="#cfcfcf" strokeWidth="3" strokeDasharray="3 3.500" /></Svg>
        <button type="button" aria-label="Close command line" className="ml-4"><Svg w={18} h={18}><path d="M2 1L16 17M16 1L2 17" stroke="#cfcfcf" strokeWidth="4" /></Svg></button>
        <button type="button" aria-label="Customize" className="ml-6"><Svg w={30} h={30}><path d="M3 27L17 13" stroke="#cfcfcf" strokeWidth="6" strokeLinecap="round" /><path d="M22 0Q13 2 14 11Q17 17 22 16Q29 15 30 8L25 11L20 9L19 5Z" fill="#cfcfcf" /></Svg></button>
        <div className="ml-[11px] flex h-full min-w-0 flex-1 items-center rounded bg-[#dcdcdc] pr-2 pl-2">
          <Svg w={32} h={24}><rect x="1" y="1" width="30" height="22" fill="#e6e6e6" stroke="#6c6c6c" strokeWidth="2" /><rect width="32" height="5" fill="#6c6c6c" /><path d="M5 8L10 12L5 16" stroke="#6c6c6c" strokeWidth="2" /><path d="M12 17H20" stroke="#6c6c6c" strokeWidth="2" /></Svg>
          <span className="ml-1"><Caret w={16} h={8} color="#6c6c6c" /></span>
          <input aria-label="Command" placeholder="Type a command" className="ml-3 min-w-0 flex-1 bg-transparent text-2xl italic outline-none placeholder:text-[#7b7b7b]" />
          <Svg w={14} h={8}><path d="M0 8L7 0L14 8Z" fill="#6c6c6c" /></Svg>
        </div>
      </form>
    </main>
  );
}

function Cell({ className = "", children }) {
  return <div className={`flex h-full items-center bg-[#3b4453] ${className}`}>{children}</div>;
}
function St({ name, on, children, w = "w-[44px]" }) {
  return (
    <button type="button" aria-label={name} aria-pressed={on} className={`flex items-center justify-center self-stretch ${w} ${on ? "mt-0.5 bg-[#628fc0] pb-0.5" : ""}`}>
      {children}
    </button>
  );
}

function StatusBar() {
  return (
    <footer className="flex h-[47px] items-stretch bg-[#222932] text-[#f5f5f5]">
      <div className="flex items-center">
        <span className="ml-3.5"><Slash /></span>
        <button type="button" className="ml-4 pt-1">Model</button>
        <button type="button" className="ml-4 flex h-full w-[94px] items-center justify-center bg-[#3b4453] pt-1 font-bold [clip-path:polygon(20%_0,100%_0,80%_100%,0_100%)]">a3</button>
        <button type="button" aria-label="New layout" className="ml-[18px]"><Plus /></button>
        <span className="ml-5"><Slash /></span>
      </div>
      <div className="ml-auto flex items-center pt-1">
        <Cell className="w-[83px] justify-center">
          <button type="button" className="pt-1">PAPER</button>
        </Cell>
        <Cell className="ml-1.5 w-12 justify-center">
          <St name="Dynamic input"><Svg><path d="M7 4V18M0 11H14" stroke={G} strokeWidth="2" /><path d="M12 20H32V28H12Z" fill={G} /><rect x="14" y="22" width="2" height="4" fill={D} /></Svg></St>
        </Cell>
        <Cell className="ml-0.5 w-52 pl-1.5">
          <St name="Ortho"><Svg><path d="M1 0V31H32M1 21H12V31" stroke={G} strokeWidth="2" /></Svg></St>
          <St name="Polar tracking" on><Svg><circle cx="13" cy="17" r="12" stroke={W} strokeWidth="2" /><path d="M32 17H14L27 3" stroke={W} strokeWidth="2" /></Svg></St>
          <St name="Polar options" w="w-9"><Caret w={16} h={8} /></St>
          <St name="Isometric"><Svg><path d="M4 3L28 27" stroke="#e4696d" strokeWidth="2.500" /><path d="M16 0V30" stroke={GR} strokeWidth="2" /><rect x="14" y="13" width="5" height="5" fill={D} stroke={G} strokeWidth="2" /></Svg></St>
          <St name="Isometric options" w="w-9"><Caret w={16} h={8} /></St>
        </Cell>
        <Cell className="ml-0.5 w-32 pl-1.5">
          <St name="Object snap tracking"><Svg><path d="M24 5L2 27H32" stroke={G} strokeWidth="2" /><rect x="10" y="12" width="6" height="6" fill={G} /></Svg></St>
          <St name="Object snap" on><Svg><rect x="1" y="1" width="8" height="8" stroke={W} strokeWidth="2" /><path d="M12 5H31V31H5V12" stroke={W} strokeWidth="2" /></Svg></St>
          <St name="Snap options" w="w-[34px]"><Caret w={16} h={8} /></St>
        </Cell>
        <Cell className="ml-1.5 w-36 justify-around px-1">
          <St name="Selection cycling"><Svg><path d="M12 1H31V12M1 12V31H8" stroke={G} strokeWidth="2" strokeDasharray="6 2" /><path d="M0 0H8L0 8Z" fill={G} /><path d="M3 3L9 9" stroke={G} strokeWidth="2" /><rect x="15" y="15" width="12" height="12" stroke={G} strokeWidth="2" /><path d="M11 16V11H16M26 11H31V16M31 26V31H26M16 31H11V26" stroke={G} strokeWidth="2" /></Svg></St>
          <St name="Annotation visibility"><Svg><path d="M13 0L17 18L27 32L13 25L0 32L9 18Z" fill={G} /><circle cx="25" cy="8" r="5" stroke={G} strokeWidth="2" /></Svg></St>
          <St name="Auto scale"><Svg><path d="M13 0L17 18L27 32L13 25L0 32L9 18Z" fill={G} /><path d="M27 0L19 9H25L22 15L31 6H25Z" fill={G} /></Svg></St>
        </Cell>
        <Cell className="ml-1.5 w-20 pl-1">
          <St name="Workspace"><Svg><Rays cx={15} cy={16} r1={8} r2={15} sw={6} c={G} /><circle cx="15" cy="16" r="8" stroke={G} strokeWidth="6" /></Svg></St>
          <St name="Workspace options" w="w-7"><Caret w={16} h={8} /></St>
        </Cell>
        <Cell className="ml-0.5 w-12 justify-center">
          <St name="Annotation monitor"><Svg><path d="M16 0V32M0 16H32" stroke={G} strokeWidth="4" /></Svg></St>
        </Cell>
        <Cell className="ml-1.5 w-12 justify-center">
          <St name="Isolate objects"><Svg><path d="M2 1H13V13H2Z" stroke={G} strokeWidth="2" /><circle cx="25" cy="13" r="6" stroke={G} strokeWidth="2" /><path d="M13 20L19 31H7Z" stroke={G} strokeWidth="2" /></Svg></St>
        </Cell>
        <Cell className="ml-1.5 w-[98px] gap-2 pl-1.5">
          <button type="button" aria-label="File trusted" className="self-end">
            <Svg w={46} h={43}><path d="M0 0H26L37 12V34H0Z" fill="#2c62a3" /><path d="M26 0L37 12H26Z" fill="#7da3d0" /><path d="M10 0V28M0 10H28" stroke={W} strokeWidth="2" /><rect x="6" y="6" width="8" height="8" fill="#2c62a3" stroke={W} strokeWidth="2" /><path d="M0 28H17L20 34V43H0Z" fill="#f7b731" /><path d="M17 34L27 43L46 27" stroke={D} strokeWidth="10" /><path d="M17 35L27 43L45 27" stroke="#4caf50" strokeWidth="7" /></Svg>
          </button>
          <button type="button" aria-label="Activity"><Svg><path d="M4 0H26V32H0V27H4Z" fill={G} /><path d="M27 0H31V4H27Z" fill={G} /><path d="M12 6H19L17 12H21L12 23V15H9Z" fill="#f59a23" /></Svg></button>
        </Cell>
        <Cell className="ml-1.5 w-[94px] gap-3.5 pl-2">
          <button type="button" aria-label="Clean screen"><Svg><rect x="1" y="5" width="30" height="23" stroke={G} strokeWidth="2" /><path d="M20 8H27V15ZM4 18V25H11Z" fill={G} /><path d="M20 15L25 10M11 18L6 23" stroke={G} strokeWidth="2" /></Svg></button>
          <button type="button" aria-label="Customization"><Svg><path d="M0 4H31M0 16H31M0 28H31" stroke={G} strokeWidth="4" /></Svg></button>
        </Cell>
      </div>
    </footer>
  );
}

export default function App() {
  return (
    <div className="flex min-h-screen flex-col overflow-x-hidden bg-[#222932] font-['Open_Sans',sans-serif] text-[23px] leading-8">
      <TitleBar />
      <nav aria-label="Ribbon tabs" className="mt-3 flex h-10 items-stretch pl-1 text-[#a9acb0]">
        <button type="button" className="w-[101px] bg-[#3b4453] pt-1 text-white">Home</button>
        {TABS.map(([t, w]) => (
          <button key={t} type="button" className={`${w} pt-1 text-center whitespace-nowrap`}>{t}</button>
        ))}
        <button type="button" className="ml-0.5 w-[108px] border-2 border-[#0696d7] bg-[#166a94] pt-0.5 text-white">Layout</button>
        <button type="button" aria-label="Minimize ribbon" className="ml-11 flex items-center gap-2 pt-3 pb-3">
          <Svg w={30} h={16}><rect width="30" height="16" fill="#f5f5f5" /><path d="M10 11L15 5L20 11Z" fill="#5d5d5d" /></Svg>
          <Caret />
        </button>
      </nav>
      <Ribbon />
      <div className="flex h-[54px] items-end text-[#f5f5f5]">
        <span className="mb-2 ml-3.5"><Slash /></span>
        <button type="button" className="mb-1.5 ml-4">Start</button>
        <div className="ml-3 flex h-12 w-[236px] items-center justify-center gap-[18px] bg-[#3b4453] pt-1 pl-1 font-bold [clip-path:polygon(8%_0,100%_0,92%_100%,0_100%)]">
          <button type="button">figuras_geo*</button>
          <button type="button" aria-label="Close tab"><Svg w={16} h={16}><path d="M1 0L15 16M15 0L1 16" stroke="#a3a8b0" strokeWidth="3" /></Svg></button>
        </div>
        <button type="button" aria-label="New drawing" className="mb-3 ml-[18px]"><Plus /></button>
        <span className="mb-2 ml-5"><Slash /></span>
      </div>
      <div className="h-2 bg-[#3b4453]" />
      <Canvas />
      <div className="h-2 bg-[#3b4453]" />
      <StatusBar />
    </div>
  );
}
